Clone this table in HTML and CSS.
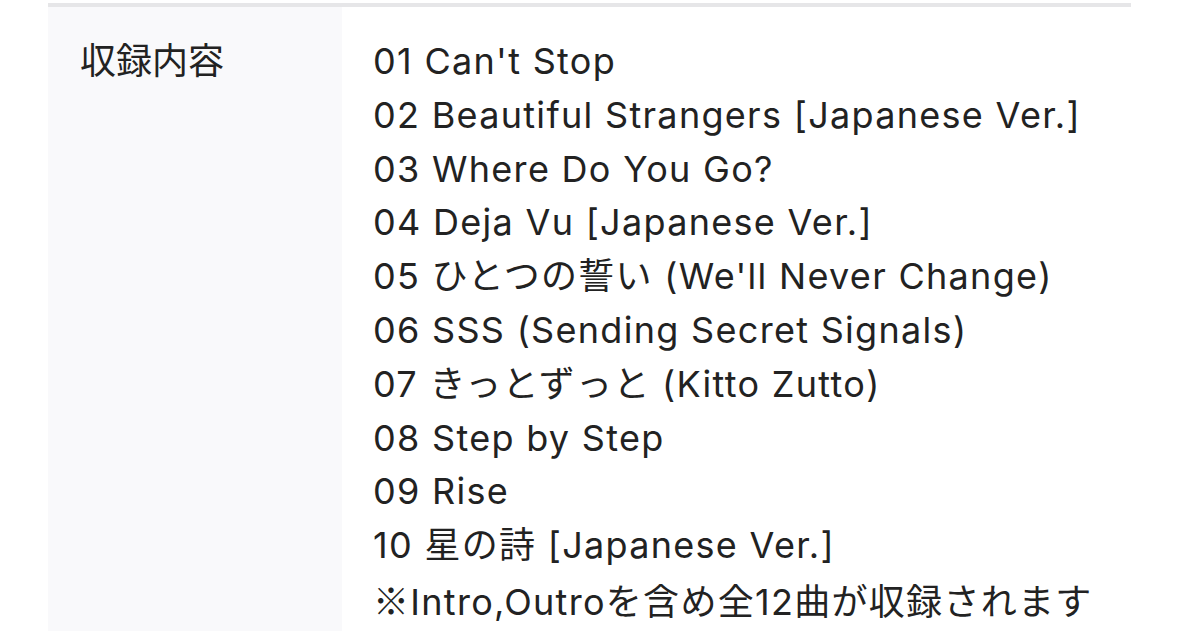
FILE: index.html
```html
<!DOCTYPE html>
<html lang="ja">
<head>
<meta charset="utf-8">
<link rel="stylesheet" href="styles.css">
</head>
<body>
<div class="spec">
  <div class="row">
    <div class="label">収録内容</div>
    <div class="value">
      <div class="line">01 Can't Stop</div>
      <div class="line">02 Beautiful Strangers [Japanese Ver.]</div>
      <div class="line">03 Where Do You Go?</div>
      <div class="line">04 Deja Vu [Japanese Ver.]</div>
      <div class="line">05 ひとつの誓い (We'll Never Change)</div>
      <div class="line">06 SSS (Sending Secret Signals)</div>
      <div class="line">07 きっとずっと (Kitto Zutto)</div>
      <div class="line">08 Step by Step</div>
      <div class="line">09 Rise</div>
      <div class="line">10 星の詩 [Japanese Ver.]</div>
      <div class="line"><span class="mark">※</span>Intro,Outroを含め全12曲が収録されます</div>
    </div>
  </div>
</div>
</body>
</html>
```

FILE: styles.css
```css
html, body {
  margin: 0;
  padding: 0;
  background: #ffffff;
}
body {
  font-family: "Inter", "Noto Sans CJK JP", sans-serif;
  color: #222222;
  overflow: hidden;
  height: 631px;
}
.spec {
  margin: 3px 48px 0 48px;
  border-top: 4px solid #e6e6e8;
}
.row {
  display: flex;
  height: 624px;
}
.label {
  width: 262px;
  flex: none;
  background: #f9f9fb;
  padding: 24px 0 0 32px;
  font-family: "Noto Sans CJK JP", sans-serif;
  font-size: 36px;
  line-height: 54px;
}
.value {
  padding: 28px 0 0 31px;
  font-size: 36px;
  line-height: 53.8px;
  letter-spacing: 1.3px;
}
.line {
  white-space: nowrap;
}
.mark {
  font-family: "Noto Sans CJK JP", sans-serif;
}
```
